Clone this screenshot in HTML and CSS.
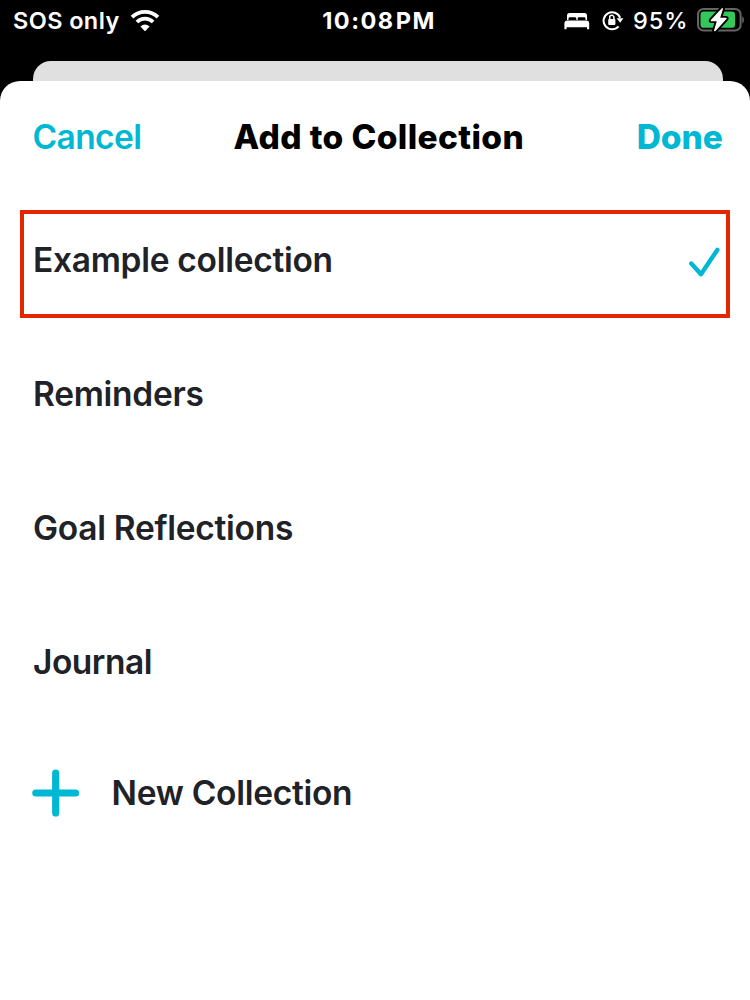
FILE: index.html
```html
<!DOCTYPE html>
<html lang="en">
<head>
<meta charset="utf-8">
<title>Add to Collection</title>
<link rel="stylesheet" href="styles.css">
</head>
<body>
<div class="phone">
  <header class="status">
    <div class="status-left">
      <span class="carrier">SOS only</span>
      <svg class="wifi" width="30" height="23" viewBox="0 0 30 23">
        <path class="wifi-arc" d="M2 8.1a18.6 18.6 0 0 1 26 0"/>
        <path class="wifi-arc" d="M6.9 13a11.6 11.6 0 0 1 16.2 0"/>
        <path class="fill" d="M10.4 17.5Q15 13.4 19.6 17.5L15.6 21.7Q15 22.3 14.4 21.7Z"/>
      </svg>
    </div>
    <div class="clock">10:08<span class="meridiem">PM</span></div>
    <div class="status-right">
      <svg class="bed" width="26" height="18" viewBox="0 0 26 18">
        <path class="fill" d="M3 8V3.5Q3 .9 5.6.9H20.4Q23 .9 23 3.5V8H21.5V6.6Q21.5 5.2 20.1 5.2H15Q13.7 5.2 13.7 6.6V8H12.3V6.6Q12.3 5.2 11 5.2H5.9Q4.5 5.2 4.5 6.6V8Z"/>
        <path class="fill" d="M.4 11.6Q.4 8.6 3.4 8.6H22.2Q25.2 8.6 25.2 11.6V17.3H23V15.3H2.6V17.3H.4Z"/>
      </svg>
      <svg class="lock" width="22" height="21" viewBox="0 0 22 21">
        <path class="lock-ring" d="M16.5 16.3A8.5 8.5 0 1 1 18.1 7.9"/>
        <path class="fill" d="M14.6 8.2H21.4L18.2 12.7Z"/>
        <rect class="fill" x="6.2" y="9" width="7.2" height="6" rx="1"/>
        <path class="shackle" d="M7.7 9.5V7.4a2.1 2.1 0 0 1 4.2 0V9.5"/>
      </svg>
      <span class="percent">95%</span>
      <svg class="battery" width="50" height="26" viewBox="0 0 50 26">
        <rect class="shell" x="1" y="2.9" width="42.6" height="21.6" rx="5.6"/>
        <path class="cap" d="M45.2 10.2Q47 11.4 47 13.7T45.2 17.2Z"/>
        <rect class="charge" x="3.5" y="5.6" width="34.6" height="16.2" rx="3.4"/>
        <path class="bolt" d="M24.6 2.4 13.8 14.1Q13.2 15.2 14.4 15.2H19.8L17 24.6Q17.3 25.9 18.5 25L29.5 13Q30.1 11.8 28.8 11.8H23.2L26 3Q25.8 1.5 24.6 2.4Z"/>
      </svg>
    </div>
  </header>
  <div class="back-card"></div>
  <main class="sheet">
    <nav class="toolbar">
      <span class="cancel">Cancel</span>
      <span class="title">Add to Collection</span>
      <span class="done">Done</span>
    </nav>
    <div class="list">
      <div class="row selected">
        <span class="label example">Example collection</span>
        <svg class="check" width="32" height="32" viewBox="0 0 32 32"><path d="M3.3 17.5 13 28.2 29.3 3.9"/></svg>
      </div>
      <div class="row"><span class="label reminders">Reminders</span></div>
      <div class="row"><span class="label goals">Goal Reflections</span></div>
      <div class="row"><span class="label journal">Journal</span></div>
    </div>
    <div class="new-row">
      <svg class="plus" width="48" height="48" viewBox="0 0 48 48"><path d="M3.8 24H43.6M23.7 4.1V43.9"/></svg>
      <span class="label new">New Collection</span>
    </div>
  </main>
</div>
</body>
</html>
```
FILE: styles.css
```css
* { box-sizing: border-box; }
body { margin: 0; background: #000; font-family: Inter, "Liberation Sans", sans-serif; }
svg { display: block; flex: none; }
.phone { width: 750px; height: 1000px; overflow: hidden; display: flex; flex-direction: column; background: #000; }
.status { height: 60.5px; flex: none; display: grid; grid-template-columns: 1fr auto 1fr; align-items: start; color: #fff; font-size: 23.5px; line-height: 42px; white-space: nowrap; }
.status-left { display: flex; padding-left: 13px; }
.carrier { width: 117px; font-weight: 600; letter-spacing: 0.4px; }
.wifi { margin-top: 9px; }
.fill { fill: #fff; }
.wifi-arc { fill: none; stroke: #fff; stroke-width: 3.8; }
.clock { padding-left: 8px; font-weight: 700; letter-spacing: 1.5px; }
.meridiem { margin-left: 1px; }
.status-right { display: flex; justify-content: flex-end; padding-right: 3px; }
.bed { margin: 12px 12px 0 0; }
.lock { margin: 10px 9px 0 0; }
.lock-ring { fill: none; stroke: #fff; stroke-width: 2; }
.shackle { fill: none; stroke: #fff; stroke-width: 1.5; }
.percent { width: 64px; font-weight: 500; letter-spacing: 0.9px; }
.battery { margin-top: 6px; }
.shell { fill: none; stroke: #656565; stroke-width: 2; }
.cap { fill: #656565; }
.charge { fill: #34c759; }
.bolt { fill: #fff; stroke: #000; stroke-width: 3.8; paint-order: stroke; }
.back-card { height: 20.5px; flex: none; margin: 0 27px 0 32.5px; background: #e0e0e0; border-radius: 18px 18px 0 0; }
.sheet { flex: 1; background: #fff; border-radius: 20px 20px 0 0; }
.toolbar { height: 129px; padding: 36px 27px 0 32.5px; display: grid; grid-template-columns: 201px 1fr auto; font-size: 33.5px; line-height: 41px; white-space: nowrap; color: #00b8d4; }
.cancel { font-weight: 600; letter-spacing: -0.6px; }
.title { color: #000; font-weight: 800; letter-spacing: 0.37px; }
.done { font-weight: 800; letter-spacing: 0; }
.list { display: grid; gap: 26px; padding: 0 20px; }
.row { height: 108px; border: 4px solid transparent; padding: 0 5px 8px 9px; display: flex; align-items: center; justify-content: space-between; }
.selected { border-color: #e42600; }
.label { font-size: 33.5px; line-height: 42px; font-weight: 600; letter-spacing: -0.28px; color: #202227; white-space: nowrap; }
.check { margin-top: 3px; }
.selected .check { margin-right: 1px; }
.check path, .plus path { fill: none; stroke: #00b8d4; stroke-linecap: round; stroke-linejoin: round; }
.check path { stroke-width: 4.4; }
.plus path { stroke-width: 7.2; }
.new-row { display: flex; align-items: center; gap: 31.5px; margin-top: 49px; padding-left: 32px; }
.new { margin-top: -1px; }
.journal { letter-spacing: -0.5px; }
```
